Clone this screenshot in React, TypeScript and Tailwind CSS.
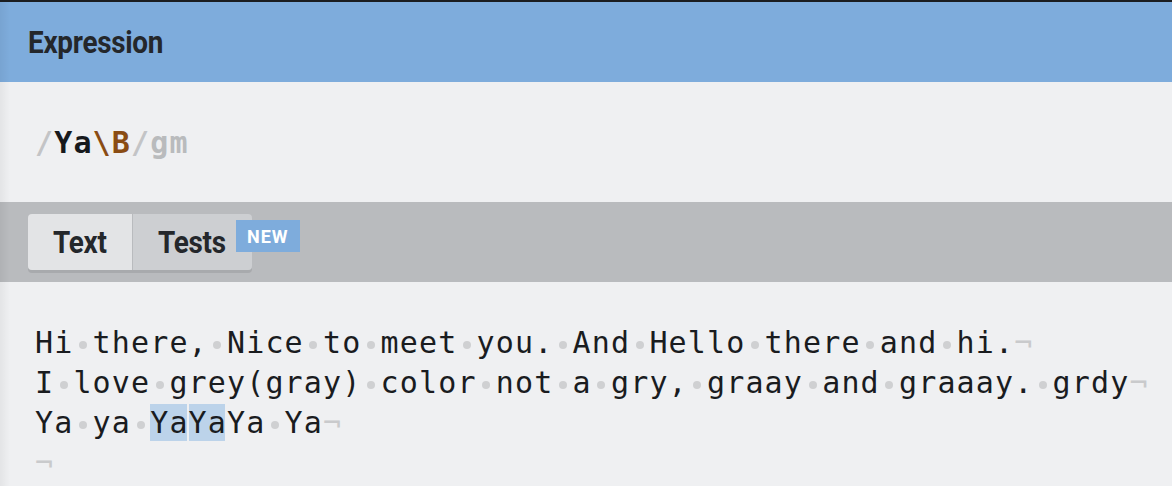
import React from "react";

const lines: string[] = [
  "Hi there, Nice to meet you. And Hello there and hi.",
  "I love grey(gray) color not a gry, graay and graaay. grdy",
  "Ya ya YaYaYa Ya",
  "",
];

// character ranges that the expression matched, per line
const matches: Record<number, [number, number][]> = {
  2: [
    [6, 8],
    [8, 10],
  ],
};

function Space() {
  return (
    <span className="inline-flex w-[19.2px] h-[40px] align-top items-center justify-center">
      <span className="w-[8px] h-[8px] rounded-full bg-[#cfd0d2] translate-y-[2px]" />
    </span>
  );
}

function renderChars(text: string) {
  return text.split("").map((ch, i) => (ch === " " ? <Space key={i} /> : <span key={i}>{ch}</span>));
}

function Line({ text, index }: { text: string; index: number }) {
  const ranges = matches[index] ?? [];
  const parts: React.ReactNode[] = [];
  let pos = 0;
  ranges.forEach(([start, end], k) => {
    if (start > pos) parts.push(<span key={`t${k}`}>{renderChars(text.slice(pos, start))}</span>);
    parts.push(
      <span key={`m${k}`} className="bg-[#bcd3ea] shadow-[inset_-2px_0_0_#eff0f2] py-[1px]">
        {renderChars(text.slice(start, end))}
      </span>
    );
    pos = end;
  });
  if (pos < text.length) parts.push(<span key="rest">{renderChars(text.slice(pos))}</span>);

  return (
    <div className="h-[40px] leading-[40px] whitespace-pre">
      {parts}
      <span className="text-[#c9cacc]">¬</span>
    </div>
  );
}

export default function App() {
  return (
    <div className="w-[1172px] h-[486px] overflow-hidden bg-[#eff0f2] flex flex-col border-t-2 border-[#1b1d20] relative">
      {/* Expression header */}
      <div className="h-[80px] bg-[#7eacdc] flex items-center px-[28px]">
        <h2 className="inline-block origin-left scale-x-[0.87] text-[32px] font-bold tracking-[-0.3px] text-[#24272b] font-['Roboto',sans-serif]">
          Expression
        </h2>
      </div>

      {/* Regex */}
      <div className="h-[120px] flex items-center px-[35px] font-['DejaVu_Sans_Mono',monospace] text-[30px] font-bold tracking-[1.14px]">
        <span className="text-[#c3c4c6]">/</span>
        <span className="text-[#17191c]">Ya</span>
        <span className="text-[#8a4c14]">\B</span>
        <span className="text-[#c3c4c6]">/</span>
        <span className="text-[#b9bbbd]">gm</span>
      </div>

      {/* Tabs */}
      <div className="h-[80px] bg-[#b9bbbe] flex items-center px-[28px]">
        <div className="flex h-[56px] rounded-[4px] shadow-[0_3px_0_#a8aaad] font-['Roboto',sans-serif] text-[32px] font-bold tracking-[-0.3px] text-[#24272b]">
          <div className="w-[104px] bg-[#e3e4e6] rounded-l-[4px] flex items-center justify-center">
            <span className="inline-block scale-x-[0.87]">Text</span>
          </div>
          <div className="w-px bg-[#b9bbbe]" />
          <div className="w-[119px] bg-[#cdcfd2] rounded-r-[4px] flex items-center pl-[25px] relative">
            <span className="inline-block origin-left scale-x-[0.87]">Tests</span>
            <span className="absolute left-[103px] top-[6px] h-[32px] px-[11px] bg-[#7eacdc] text-white text-[18px] tracking-[1px] flex items-center">
              NEW
            </span>
          </div>
        </div>
      </div>

      {/* Text */}
      <div className="flex-1 pt-[41px] px-[35px] font-['DejaVu_Sans_Mono',monospace] text-[30px] tracking-[1.14px] text-[#1a1c1f]">
        {lines.map((l, i) => (
          <Line key={i} text={l} index={i} />
        ))}
      </div>

      <div className="absolute inset-y-0 left-0 w-[10px] bg-gradient-to-r from-black/[0.05] to-transparent pointer-events-none" />
    </div>
  );
}
